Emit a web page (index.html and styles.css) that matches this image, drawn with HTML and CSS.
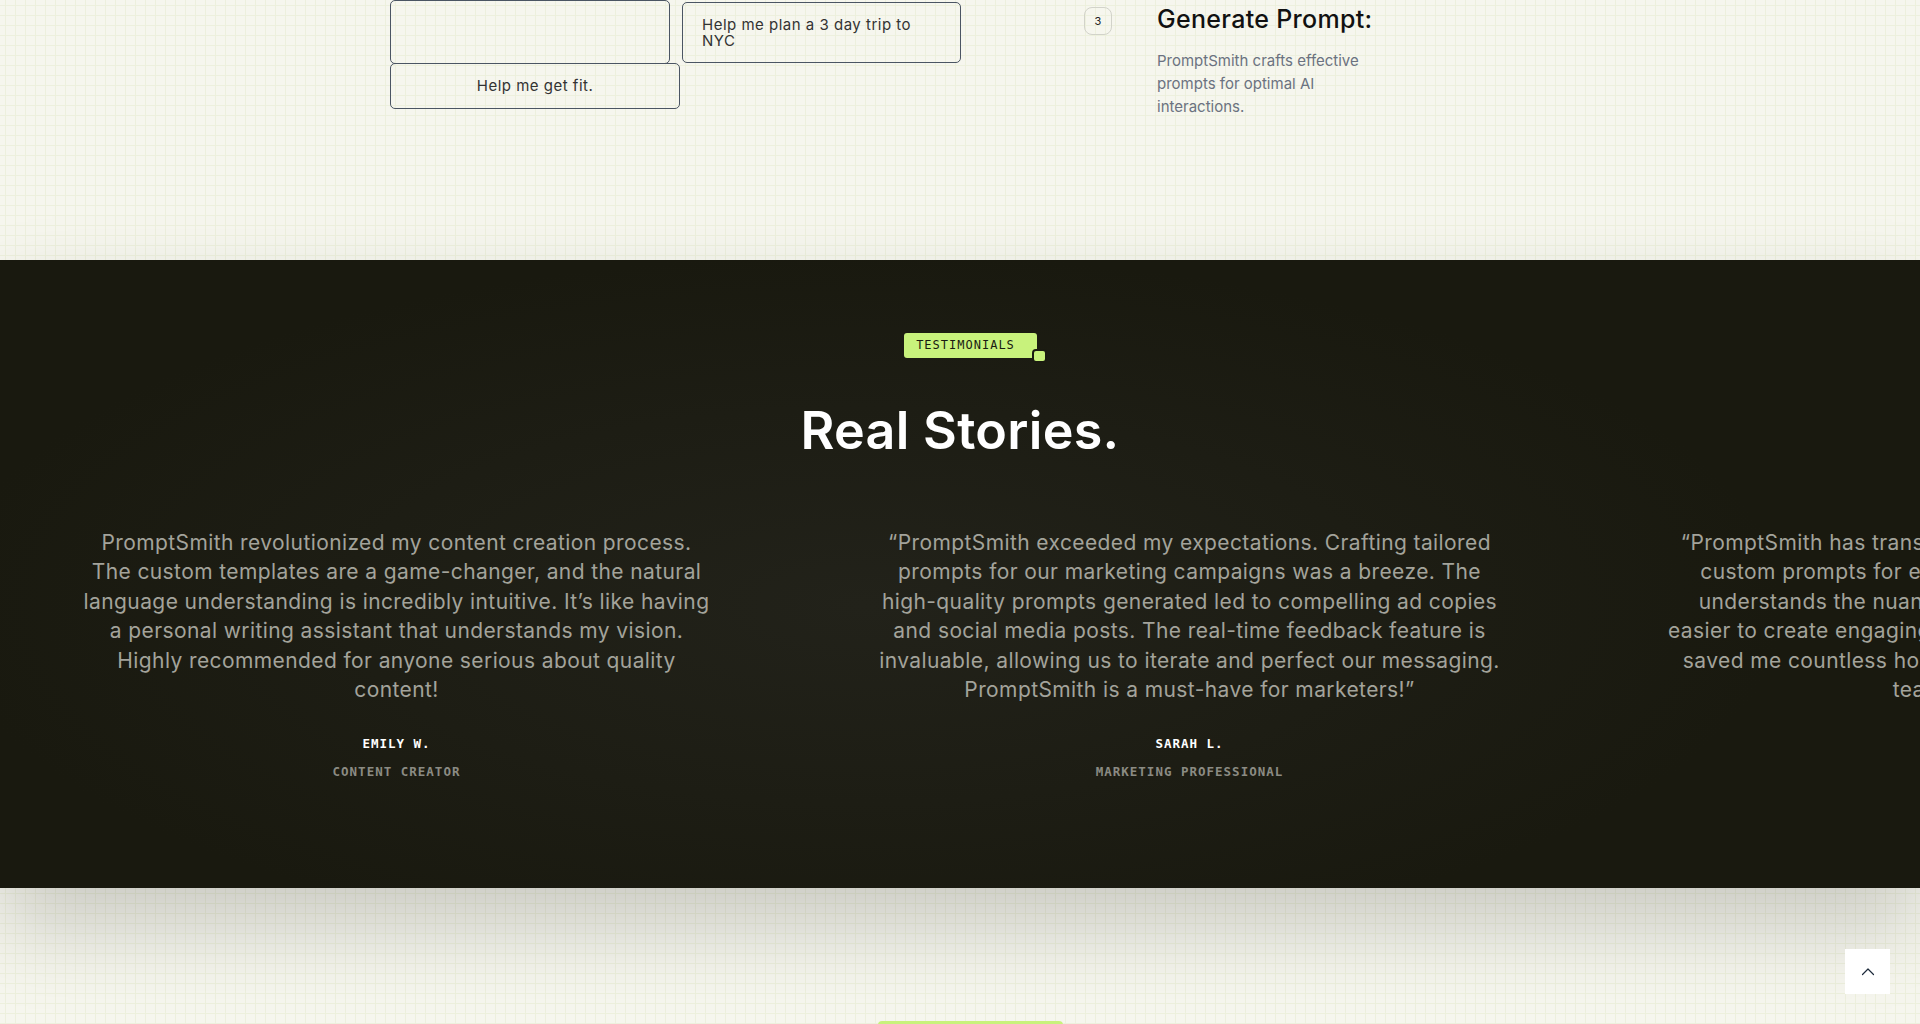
FILE: index.html
```html
<!DOCTYPE html>
<html lang="en">
<head>
<meta charset="utf-8">
<title>PromptSmith</title>
<link rel="stylesheet" href="styles.css">
</head>
<body>
<section class="how">
  <div class="how-inner">
    <div class="chips">
      <div class="chip-col">
        <div class="chip chip-a"></div>
        <div class="chip chip-fit">Help me get fit.</div>
      </div>
      <div class="chip-col">
        <div class="chip chip-nyc"><span>Help me plan a 3 day trip to NYC</span></div>
      </div>
    </div>
    <div class="step">
      <div class="step-num">3</div>
      <div class="step-body">
        <h3 class="step-title">Generate Prompt:</h3>
        <p class="step-text">PromptSmith crafts effective prompts for optimal AI interactions.</p>
      </div>
    </div>
  </div>
</section>

<section class="testimonials">
  <div class="t-head">
    <span class="badge">TESTIMONIALS<span class="badge-dot"></span></span>
    <h2 class="t-title">Real Stories.</h2>
  </div>
  <div class="slides">
    <figure class="slide">
      <blockquote class="quote">PromptSmith revolutionized my content creation process.<br>The custom templates are a game-changer, and the natural<br>language understanding is incredibly intuitive. It’s like having<br>a personal writing assistant that understands my vision.<br>Highly recommended for anyone serious about quality<br>content!</blockquote>
      <figcaption>
        <div class="name">EMILY W.</div>
        <div class="role">CONTENT CREATOR</div>
      </figcaption>
    </figure>
    <figure class="slide">
      <blockquote class="quote">“PromptSmith exceeded my expectations. Crafting tailored<br>prompts for our marketing campaigns was a breeze. The<br>high-quality prompts generated led to compelling ad copies<br>and social media posts. The real-time feedback feature is<br>invaluable, allowing us to iterate and perfect our messaging.<br>PromptSmith is a must-have for marketers!”</blockquote>
      <figcaption>
        <div class="name">SARAH L.</div>
        <div class="role">MARKETING PROFESSIONAL</div>
      </figcaption>
    </figure>
    <figure class="slide">
      <blockquote class="quote">“PromptSmith has transformed the way I plan lessons. The<br>custom prompts for educational content are spot-on. It<br>understands the nuances of each subject, making it far<br>easier to create engaging materials for all my students. It has<br>saved me countless hours of lesson preparation as a busy<br>teacher. I love it!”</blockquote>
      <figcaption>
        <div class="name">DAVID K.</div>
        <div class="role">EDUCATOR</div>
      </figcaption>
    </figure>
  </div>
</section>

<section class="next">
  <div class="next-badge"></div>
</section>

<button class="to-top" aria-label="Back to top">
  <svg width="16" height="16" viewBox="0 0 16 16" fill="none"><path d="M2.5 10.5 L8 5 L13.5 10.5" stroke="#1c2a3a" stroke-width="1.2" stroke-linecap="round" stroke-linejoin="round"/></svg>
</button>
</body>
</html>
```

FILE: styles.css
```css
html, body {
  margin: 0;
  padding: 0;
  height: 1024px;
  overflow: hidden;
}

body {
  background-color: #f6f6ee;
  font-family: Inter, "Noto Sans", sans-serif;
}

.how,
.next {
  background-color: #f6f6ee;
  background-image:
    linear-gradient(to right, #edf0dd 1px, transparent 1px),
    linear-gradient(to bottom, #edf0dd 1px, transparent 1px);
  background-size: 10px 10px;
  background-position: 5px 5px;
}

/* ---------- top section ---------- */
.how {
  height: 260px;
  overflow: hidden;
}

.how-inner {
  display: flex;
  padding-left: 390px;
}

.chips {
  display: flex;
  gap: 2px;
}

.chip-col {
  display: flex;
  flex-direction: column;
}

.chip {
  box-sizing: border-box;
  border: 1px solid #4b5563;
  border-radius: 5px;
  color: #333333;
  font-size: 15px;
  line-height: 16px;
  letter-spacing: 0.5px;
}

.chip-a {
  width: 280px;
  height: 64px;
}

.chip-fit {
  width: 290px;
  height: 46px;
  margin-top: -1px;
  display: flex;
  align-items: center;
  justify-content: center;
}

.chip-nyc {
  width: 279px;
  height: 61px;
  margin-top: 2px;
  padding: 0 30px 0 19px;
  display: flex;
  align-items: center;
}

.step {
  display: flex;
  margin-left: 123px;
  gap: 45px;
}

.step-num {
  box-sizing: border-box;
  width: 28px;
  height: 28px;
  margin-top: 7px;
  border: 1px solid #d2d3ca;
  border-radius: 8px;
  display: flex;
  align-items: center;
  justify-content: center;
  font-size: 11px;
  color: #222;
}

.step-body {
  margin-top: 4px;
}

.step-title {
  margin: 0;
  font-size: 25px;
  line-height: 30px;
  font-weight: 500;
  color: #111;
  letter-spacing: 0.3px;
}

.step-text {
  margin: 15px 0 0;
  width: 230px;
  font-size: 15px;
  line-height: 23px;
  color: #6b7280;
}

/* ---------- testimonials ---------- */
.testimonials {
  position: relative;
  z-index: 2;
  box-sizing: border-box;
  height: 628px;
  padding-top: 73px;
  background-color: #1a1a11;
  background-image: radial-gradient(ellipse 60% 70% at 45% 55%, #22221a 0%, #1d1d14 45%, #19190f 80%);
  box-shadow: 0 40px 80px rgba(0, 0, 0, 0.18);
  overflow: hidden;
}

.t-head {
  text-align: center;
}

.badge {
  position: relative;
  display: inline-block;
  height: 25px;
  line-height: 25px;
  padding: 0 22px 0 12px;
  margin-left: 21px;
  background: #c8f27c;
  border-radius: 3px;
  color: #1a1a12;
  font-family: "DejaVu Sans Mono", "Liberation Mono", monospace;
  font-size: 12px;
  letter-spacing: 1px;
}

.badge-dot {
  position: absolute;
  right: -10px;
  bottom: -5px;
  width: 11px;
  height: 10px;
  background: #c8f27c;
  border: 2px solid #1a1a11;
  border-radius: 4px;
}

.t-title {
  margin: 42px 0 0;
  font-size: 52px;
  line-height: 62px;
  font-weight: 600;
  color: #ffffff;
  letter-spacing: 0.3px;
}

.slides {
  display: flex;
  margin-top: 66px;
}

.slide {
  flex: 0 0 793px;
  box-sizing: border-box;
  margin: 0;
  padding: 0 60px;
  text-align: center;
}

.quote {
  margin: 0;
  font-size: 21px;
  line-height: 29.4px;
  letter-spacing: 0.4px;
  color: #a3a39b;
  white-space: nowrap;
}

.name {
  margin-top: 31px;
  font-family: "DejaVu Sans Mono", "Liberation Mono", monospace;
  font-size: 12.5px;
  line-height: 18px;
  font-weight: 700;
  letter-spacing: 1px;
  color: #ffffff;
}

.role {
  margin-top: 10px;
  font-family: "DejaVu Sans Mono", "Liberation Mono", monospace;
  font-size: 12.5px;
  line-height: 18px;
  font-weight: 700;
  letter-spacing: 1px;
  color: #8b8b83;
}

/* ---------- next section ---------- */
.next {
  position: relative;
  z-index: 1;
  box-sizing: border-box;
  height: 136px;
  padding-top: 133px;
  display: flex;
  justify-content: center;
  overflow: hidden;
}

.next-badge {
  width: 185px;
  height: 30px;
  margin-left: 21px;
  background: #c8f27c;
  border-radius: 4px;
}

/* ---------- back to top ---------- */
.to-top {
  position: fixed;
  right: 30px;
  bottom: 30px;
  z-index: 10;
  width: 45px;
  height: 45px;
  padding: 0;
  border: none;
  background: #ffffff;
  display: flex;
  align-items: center;
  justify-content: center;
  cursor: pointer;
}
```
